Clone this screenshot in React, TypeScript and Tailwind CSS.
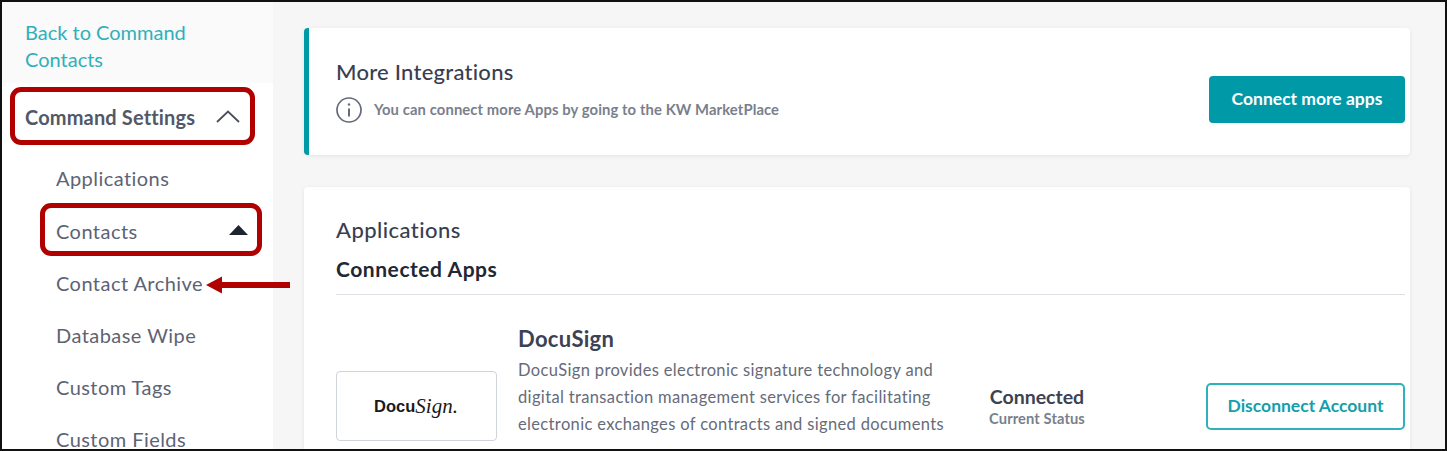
import React from "react";

const font = { fontFamily: '"Lato", "Noto Sans", sans-serif' };

function SideItem({ children, right, tall }: { children: React.ReactNode; right?: React.ReactNode; tall?: boolean }) {
  return (
    <div className={`${tall ? "h-[53px]" : "h-[52px]"} shrink-0 flex items-center justify-between pl-[54px] pr-[14px] text-[20px] tracking-[0.45px] text-[#5d6373]`}>
      <span>{children}</span>
      {right}
    </div>
  );
}

export default function App() {
  return (
    <div style={font} className="relative w-[1447px] h-[451px] overflow-hidden border-2 border-[#111] bg-[#f6f6f6] flex">
      <aside className="w-[271px] shrink-0 bg-white flex flex-col">
        <div className="h-[81px] shrink-0 bg-[#fafafa] pl-[23px] pt-[17px] text-[20px] leading-[27px] text-[#2fb0bb]">
          Back to Command
          <br />
          Contacts
        </div>
        <div className="h-[67px] shrink-0 flex items-center justify-between pl-[23px] pr-[33px] text-[20px] font-bold tracking-[0.15px] text-[#525868]">
          <span>Command Settings</span>
          <svg width="24" height="13" viewBox="0 0 24 13" fill="none" stroke="#4a4f5a" strokeWidth="1.8">
            <path d="M1 12 L12 1.5 L23 12" />
          </svg>
        </div>
        <div className="pt-[2px] shrink-0">
          <SideItem>Applications</SideItem>
          <SideItem
            tall
            right={
              <svg width="19" height="10" viewBox="0 0 19 10" className="mr-[11px] -mt-[1px]">
                <path d="M9.5 0 L19 10 L0 10 Z" fill="#1f2530" />
              </svg>
            }
          >
            Contacts
          </SideItem>
          <SideItem>Contact Archive</SideItem>
          <SideItem>Database Wipe</SideItem>
          <SideItem>Custom Tags</SideItem>
          <SideItem>Custom Fields</SideItem>
        </div>
      </aside>

      <main className="flex-1 pl-[31px] pr-[35px] pt-[26px] flex flex-col gap-[32px] bg-[#f6f6f6]">
        <section className="h-[127px] shrink-0 bg-white rounded-[4px] border-l-[5px] border-[#0099a8] shadow-[0_1px_4px_rgba(0,0,0,0.08)] pl-[27px] pr-[5px] flex items-center justify-between">
          <div className="-mt-[4px]">
            <div className="text-[22px] leading-[30px] font-medium tracking-[0.25px] text-[#383e50]">More Integrations</div>
            <div className="flex items-center gap-[12px] mt-[10px]">
              <svg width="26" height="26" viewBox="0 0 26 26" fill="none" stroke="#666b7a" strokeWidth="1.7">
                <circle cx="13" cy="13" r="12" />
                <path d="M13 11.5 V19.5" strokeWidth="2" />
                <circle cx="13" cy="7.5" r="1.2" fill="#666b7a" stroke="none" />
              </svg>
              <span className="text-[14.8px] font-bold tracking-[0.1px] text-[#7a7f8c]">You can connect more Apps by going to the KW MarketPlace</span>
            </div>
          </div>
          <button className="w-[196px] h-[47px] rounded-[4px] bg-[#0099a8] text-white text-[17.5px] font-bold mt-[16px]">Connect more apps</button>
        </section>

        <section className="flex-1 min-h-0 bg-white rounded-t-[4px] shadow-[0_1px_4px_rgba(0,0,0,0.08)] pl-[32px] pr-[5px] pt-[28px]">
          <div className="text-[22px] leading-[30px] font-medium tracking-[0.45px] text-[#383e50]">Applications</div>
          <div className="text-[21px] leading-[28px] font-bold tracking-[0.55px] text-[#222733] mt-[10px] pb-[11px] border-b border-[#dcdfe3]">Connected Apps</div>
          <div className="flex items-start mt-[30px]">
            <div className="w-[161px] h-[70px] mt-[46px] shrink-0 rounded-[4px] border border-[#cfd4da] flex items-center justify-center text-[#1a1a1a] pr-[1px]">
              <span className="text-[16.5px] font-bold leading-none" style={{ fontFamily: '"Liberation Sans", sans-serif' }}>Docu</span>
              <span className="text-[21px] italic leading-none" style={{ fontFamily: '"Liberation Serif", serif' }}>Sign.</span>
            </div>
            <div className="w-[440px] ml-[21px] shrink-0">
              <div className="text-[22px] leading-[28px] font-bold tracking-[0.3px] text-[#3c4254]">DocuSign</div>
              <p className="text-[16.5px] leading-[27px] tracking-[0.35px] text-[#666b7a] mt-[4px] whitespace-nowrap">
                DocuSign provides electronic signature technology and
                <br />
                digital transaction management services for facilitating
                <br />
                electronic exchanges of contracts and signed documents
              </p>
            </div>
            <div className="w-[120px] ml-[19px] mt-[60px] shrink-0 flex flex-col items-center">
              <div className="text-[19.5px] leading-[24px] font-bold text-[#3c4254]">Connected</div>
              <div className="text-[14.7px] leading-[18px] font-bold tracking-[0.1px] text-[#7a7f8c]">Current Status</div>
            </div>
            <button className="ml-auto mt-[58px] w-[199px] h-[47px] rounded-[5px] border-2 border-[#2fb0bb] bg-white text-[#139fad] text-[17.5px] font-bold">Disconnect Account</button>
          </div>
        </section>
      </main>

      {/* annotation overlays */}
      <div className="absolute left-[8px] top-[85px] w-[245px] h-[58px] rounded-[11px] border-[5px] border-[#b00000]" />
      <div className="absolute left-[38px] top-[201px] w-[222px] h-[53px] rounded-[11px] border-[5px] border-[#b00000]" />
      <svg className="absolute left-[204px] top-[273px]" width="86" height="20" viewBox="0 0 86 20">
        <path d="M0 10 L16 1.5 V7 H84 V13 H16 V18.5 Z" fill="#b00000" />
      </svg>
    </div>
  );
}
